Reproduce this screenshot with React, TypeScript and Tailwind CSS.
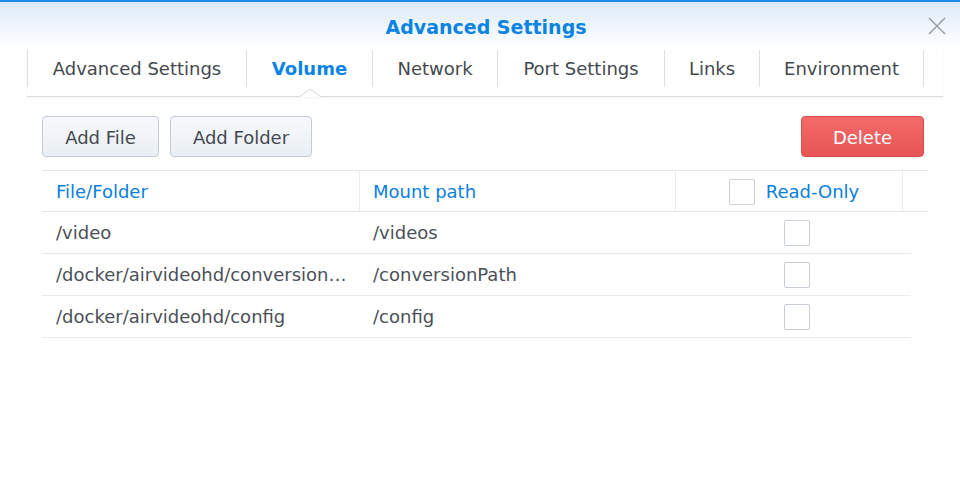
const FONT = "font-['DejaVu_Sans',Verdana,sans-serif]";

const tabs = [
  { label: 'Advanced Settings', width: 'w-[219px]' },
  { label: 'Volume', width: 'w-[126px]', active: true },
  { label: 'Network', width: 'w-[125px]' },
  { label: 'Port Settings', width: 'w-[167px]' },
  { label: 'Links', width: 'w-[95px]' },
  { label: 'Environment', width: 'w-[165px]' },
];

const volumes = [
  { file: '/video', mount: '/videos' },
  { file: '/docker/airvideohd/conversionPath', mount: '/conversionPath' },
  { file: '/docker/airvideohd/config', mount: '/config' },
];

function Checkbox() {
  return <span className="block h-[26px] w-[26px] rounded-[2px] border border-[#c9cfd6] bg-white" />;
}

function Button({ children, width, danger }: { children: string; width: string; danger?: boolean }) {
  return danger ? (
    <button className={`h-[41px] ${width} rounded-[4px] border border-[#d44c4c] bg-gradient-to-b from-[#f36a6a] to-[#e85555] pt-[2px] text-[18px] text-white`}>
      {children}
    </button>
  ) : (
    <button className={`h-[41px] ${width} rounded-[4px] border border-[#c3ccd6] bg-gradient-to-b from-[#f7f9fc] to-[#eaeff5] pt-[2px] text-[18px] text-[#44494f]`}>
      {children}
    </button>
  );
}

export default function App() {
  return (
    <div className={`${FONT} h-[482px] w-[960px] overflow-hidden border-t-2 border-[#1a8ae6] bg-white`}>
      <div className="relative flex h-[46px] items-center justify-center bg-gradient-to-b from-[#dceaf8] to-white pt-[4px]">
        <h1 className="ml-[12px] text-[19px] font-bold text-[#0b84e3]">Advanced Settings</h1>
        <svg className="absolute right-[14px] top-[15px]" width="18" height="18" viewBox="0 0 18 18">
          <path d="M1 1 L17 17 M17 1 L1 17" stroke="#9aa1a8" strokeWidth="1.6" />
        </svg>
      </div>

      <div className="relative ml-[27px] mr-[17px] flex h-[48px] items-start pt-[2px] shadow-[0_1px_0_#dadde1,0_2px_2px_rgba(0,0,0,0.05)]">
        {tabs.map((t, i) => (
          <div
            key={t.label}
            className={`relative flex h-[37px] ${t.width} items-center justify-center border-l border-[#dcdfe3] ${
              i === tabs.length - 1 ? 'border-r' : ''
            } text-[18px] ${t.active ? 'font-bold text-[#0b84e3]' : 'text-[#44494f]'}`}
          >
            {t.label}
            {t.active && (
              <svg className="absolute bottom-[-10px] left-1/2 -ml-[11px]" width="22" height="8" viewBox="0 0 22 8">
                <path d="M0 8 L11 0 L22 8 Z" fill="white" />
                <path d="M0 8 L11 0 L22 8" fill="none" stroke="#d4d8dc" strokeWidth="1" />
              </svg>
            )}
          </div>
        ))}
      </div>

      <div className="ml-[42px] mr-[36px] mt-[20px] flex items-center gap-[11px]">
        <Button width="w-[117px]">Add File</Button>
        <Button width="w-[142px]">Add Folder</Button>
        <div className="flex-1" />
        <Button width="w-[123px]" danger>
          Delete
        </Button>
      </div>

      <div className="ml-[42px] mt-[13px] w-[886px] text-[18px]">
        <div className="flex h-[42px] border-y border-[#e1e6ec] text-[#0a80dc]">
          <div className="flex w-[317px] items-center px-[14px]">File/Folder</div>
          <div className="flex w-[316px] items-center border-l border-[#e8ecf0] px-[13px]">Mount path</div>
          <div className="flex w-[228px] items-center justify-center gap-[11px] border-x border-[#e8ecf0] pl-[10px] pt-[1px]">
            <Checkbox />
            <span>Read-Only</span>
          </div>
        </div>
        {volumes.map((v) => (
          <div key={v.file} className="flex h-[42px] w-[869px] border-b border-[#e8ebee] text-[#4b5058]">
            <div className="flex w-[317px] min-w-0 items-center pl-[14px] pr-[10px]">
              <span className="truncate">{v.file}</span>
            </div>
            <div className="flex w-[316px] items-center px-[14px]">{v.mount}</div>
            <div className="flex flex-1 items-center justify-center pl-[8px]">
              <Checkbox />
            </div>
          </div>
        ))}
      </div>
    </div>
  );
}
